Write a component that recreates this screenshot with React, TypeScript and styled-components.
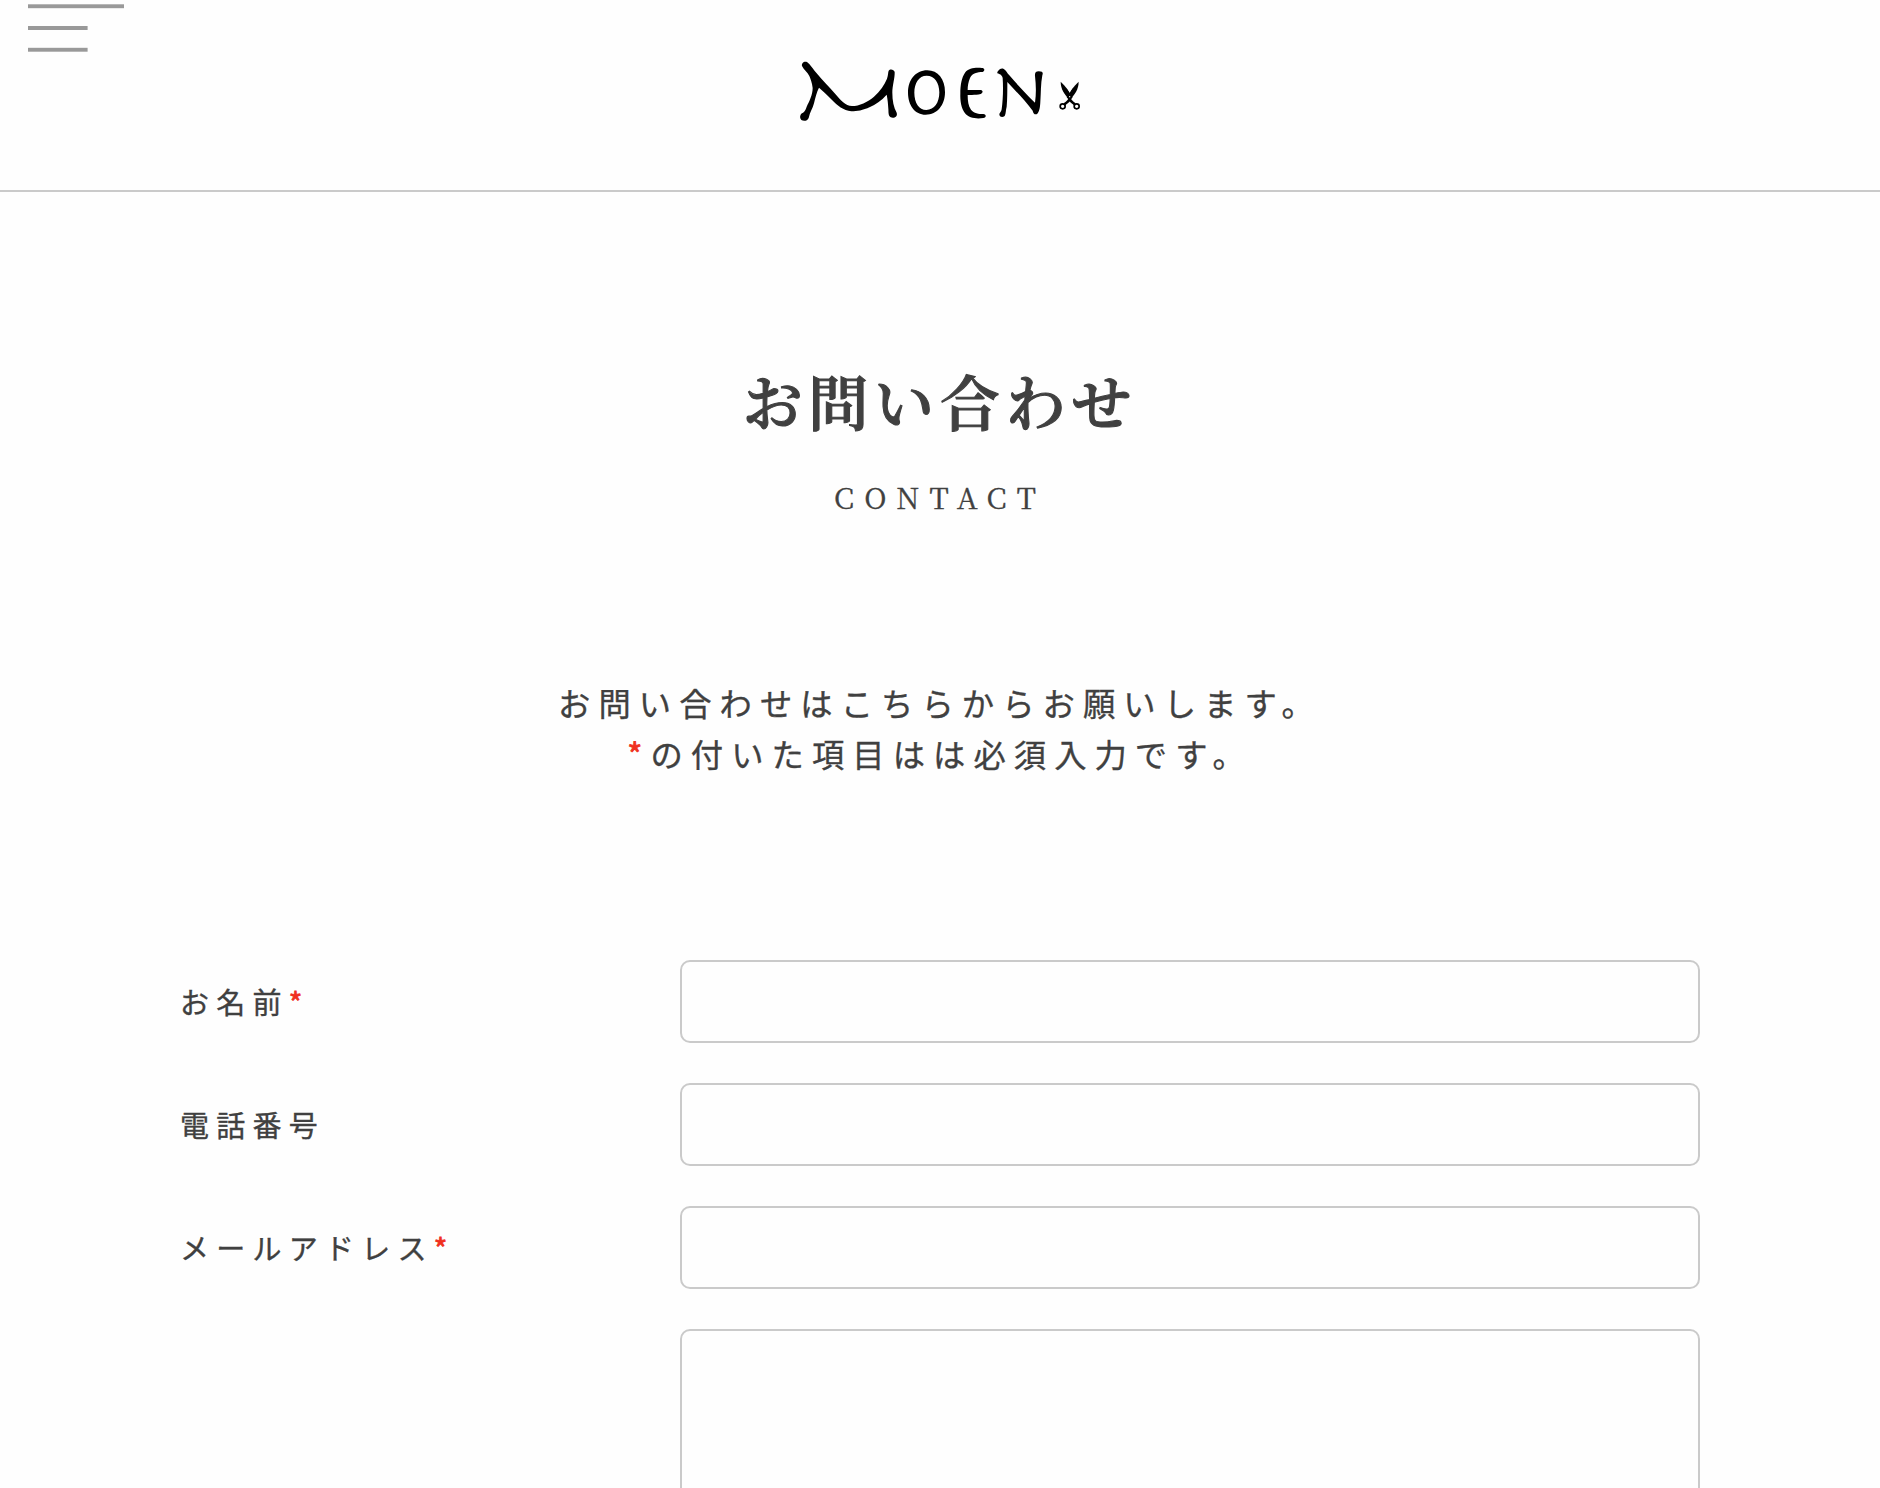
import styled, { createGlobalStyle } from "styled-components";

const GlobalStyle = createGlobalStyle`
    * {
        box-sizing: border-box;
    }

    body {
        margin: 0;
        background-color: #fefefe;
        color: #404040;
        font-family: "Noto Sans CJK JP", sans-serif;
        -webkit-text-stroke: 0.35px currentColor;
    }
`;

const Page = styled.div`
    width: 100%;
    height: 1488px;
    overflow: hidden;
`;

const Header = styled.header`
    height: 192px;
    display: flex;
    justify-content: center;
    align-items: flex-start;
    border-bottom: 2px solid #cacaca;
`;

const MenuButton = styled.button`
    position: absolute;
    top: 0;
    left: 28px;
    width: 96px;
    height: 56px;
    padding: 0;
    border: none;
    background: none;
    cursor: pointer;

    svg {
        display: block;
        fill: #999;
    }
`;

const Logo = styled.svg`
    width: 320px;
    height: 100px;
    margin-top: 40px;
`;

const TitleArea = styled.div`
    padding-top: 165px;
    display: flex;
    flex-direction: column;
    align-items: center;
`;

const Title = styled.h1`
    margin: 0;
    font-family: "Noto Serif CJK JP", "Noto Serif JP", "Noto Sans CJK JP", serif;
    font-size: 59.8px;
    line-height: 86px;
    font-weight: 600;
    letter-spacing: 0.1em;
    -webkit-text-stroke: 1.1px currentColor;
`;

const SubTitle = styled.p`
    margin: 34px 0 0;
    font-family: "Noto Serif CJK JP", "Liberation Serif", serif;
    font-size: 29px;
    line-height: 40px;
    letter-spacing: 0.35em;
`;

const Lead = styled.p`
    margin: 160px 0 0;
    font-size: 32.3px;
    line-height: 51px;
    letter-spacing: 0.25em;
    text-align: center;
`;

const Required = styled.span`
    color: #f03020;
    -webkit-text-stroke: 0.8px currentColor;
`;

const Form = styled.form`
    width: 1520px;
    margin: 181px auto 0;
    display: flex;
    flex-direction: column;
    gap: 40px;
`;

const Row = styled.div`
    display: flex;
    justify-content: space-between;
    align-items: center;
`;

const Label = styled.label`
    padding-bottom: 2px;
    font-size: 29px;
    line-height: 44px;
    letter-spacing: 0.25em;
`;

const Input = styled.input`
    width: 1020px;
    height: 83px;
    border: 2px solid #cacaca;
    border-radius: 10px;
    background: none;
`;

const TextArea = styled.textarea`
    width: 1020px;
    height: 400px;
    border: 2px solid #cacaca;
    border-radius: 10px;
    background: none;
    resize: none;
`;

const fields = [
    { id: "name", label: "お名前", required: true },
    { id: "tel", label: "電話番号", required: false },
    { id: "email", label: "メールアドレス", required: true },
];

function MoenLogo() {
    return (
        <Logo viewBox="0 0 960 300" role="img" aria-label="MOEN">
            <g transform="translate(48 48)">
                <path d="M18 30C16 22 24 14 33 18C42 24 52 40 62 52C80 74 98 92 118 114C134 132 148 150 168 150C190 150 215 138 234 122C252 106 266 86 273 68C277 56 276 48 278 44C282 38 294 40 296 48C297 66 289 88 289 110C289 134 293 154 302 170C306 182 294 188 284 184C276 178 278 168 277 158C276 142 275 130 272 116C256 134 238 146 222 153C200 163 184 166 166 166C142 164 124 148 108 132C92 116 80 104 69 95C62 108 58 126 54 142C50 158 42 168 38 186C34 196 22 196 16 192C10 186 12 176 18 172C28 166 28 162 32 152C40 136 50 116 50 96C48 80 44 70 40 60C34 48 24 42 18 30Z" />
            </g>
            <g transform="translate(360 48)">
                <path
                    fillRule="evenodd"
                    d="M82 43C114 43 135 70 135 108C135 147 112 176 77 176C45 176 24 148 24 110C24 72 46 43 82 43ZM80 59C56 59 43 82 43 110C43 140 57 162 79 162C103 162 118 140 118 109C118 80 104 59 80 59Z"
                />
                <path d="M246 36C254 36 256 44 248 48C232 48 216 52 210 66C205 78 203 90 203 102L240 102C250 102 250 110 242 114C230 118 215 116 203 117C203 135 205 150 213 161C222 172 236 174 250 174C260 176 260 184 250 186C230 190 206 186 195 172C184 158 180 135 181 112C181 88 185 64 195 50C206 36 226 34 246 36Z" />
            </g>
            <g transform="translate(630 48)">
                <path d="M22 48C26 42 32 36 40 38C48 42 52 52 58 58C84 88 108 114 135 140C139 112 138 86 135 60C134 50 138 46 146 46C158 46 160 50 157 58C152 84 153 110 151 138C150 156 148 168 140 175C132 176 129 170 128 164C104 132 78 106 52 78C52 104 52 130 50 152C47 162 48 172 44 180C38 184 30 184 28 176C28 170 34 168 35 160C39 130 40 98 38 66C36 56 28 54 22 52Z" />
                {/* scissors */}
                <path d="M212 77C226 91 239 106 248 124L238 131C224 115 212 100 212 77Z" />
                <path d="M266 77C252 91 239 106 230 124L240 131C254 115 266 100 266 77Z" />
                <g fill="none" stroke="#000">
                    <path strokeWidth="8" d="M243 122Q238 136 223 145M235 122Q240 136 255 145" />
                    <circle cx="218" cy="151" r="7.5" strokeWidth="5" />
                    <circle cx="260" cy="151" r="7.5" strokeWidth="5" />
                </g>
                <circle cx="239" cy="122" r="2" fill="#fefefe" />
                {/* gap between the open blades */}
                <path d="M222 77L239 110L256 77Z" fill="#fefefe" />
            </g>
        </Logo>
    );
}

function App() {
    return (
        <Page>
            <GlobalStyle />
            <MenuButton aria-label="menu">
                <svg width="96" height="56">
                    <rect y="4.3" width="96" height="3.9" />
                    <rect y="26" width="59.6" height="4" />
                    <rect y="47.8" width="59.6" height="3.9" />
                </svg>
            </MenuButton>
            <Header>
                <MoenLogo />
            </Header>
            <TitleArea>
                <Title>お問い合わせ</Title>
                <SubTitle>CONTACT</SubTitle>
            </TitleArea>
            <Lead>
                お問い合わせはこちらからお願いします。
                <br />
                <Required>*</Required>の付いた項目はは必須入力です。
            </Lead>
            <Form>
                {fields.map((field) => (
                    <Row key={field.id}>
                        <Label htmlFor={field.id}>
                            {field.label}
                            {field.required && <Required>*</Required>}
                        </Label>
                        <Input id={field.id} type="text" />
                    </Row>
                ))}
                <Row>
                    <Label />
                    <TextArea />
                </Row>
            </Form>
        </Page>
    );
}

export default App;
